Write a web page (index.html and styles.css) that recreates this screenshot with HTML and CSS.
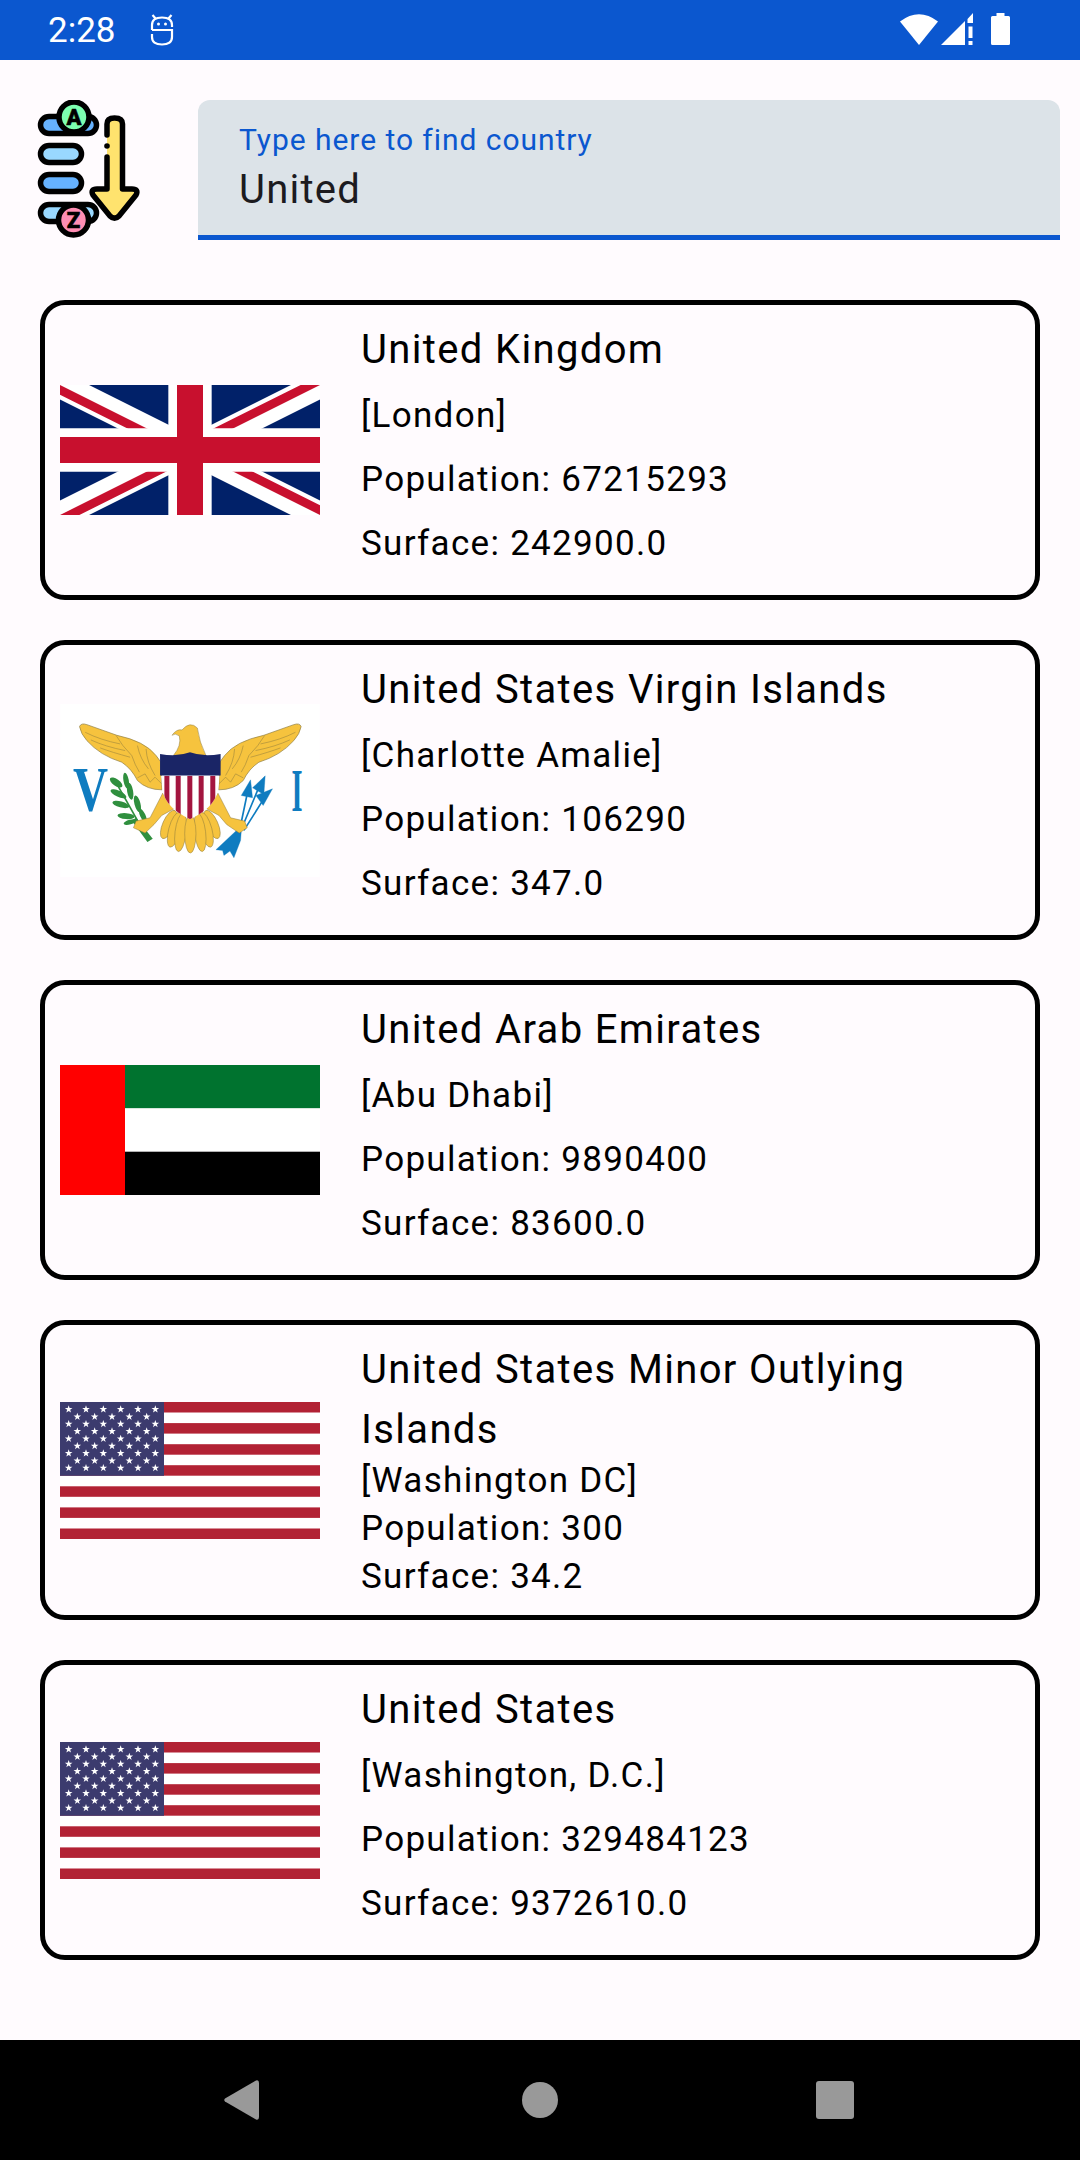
FILE: index.html
```html
<!DOCTYPE html>
<html lang="en">
<head>
  <meta charset="UTF-8">
  <title>Countries</title>
  <link rel="stylesheet" href="styles.css">
</head>
<body>
  <svg class="defs" width="0" height="0">
    <defs>
      <polygon id="star" points="0,-4 0.95,-1.25 3.8,-1.25 1.5,0.5 2.35,3.25 0,1.55 -2.35,3.25 -1.5,0.5 -3.8,-1.25 -0.95,-1.25"/>
      <g id="row6">
        <use href="#star" x="8.67"/><use href="#star" x="26"/><use href="#star" x="43.33"/>
        <use href="#star" x="60.67"/><use href="#star" x="78"/><use href="#star" x="95.33"/>
      </g>
      <g id="row5">
        <use href="#star" x="17.33"/><use href="#star" x="34.67"/><use href="#star" x="52"/>
        <use href="#star" x="69.33"/><use href="#star" x="86.67"/>
      </g>
      <symbol id="us-flag" viewBox="0 0 260 137">
        <rect width="260" height="137" fill="#fff"/>
        <g fill="#b22234">
          <rect y="0" width="260" height="10.5"/><rect y="21.1" width="260" height="10.5"/>
          <rect y="42.2" width="260" height="10.5"/><rect y="63.2" width="260" height="10.5"/>
          <rect y="84.3" width="260" height="10.5"/><rect y="105.4" width="260" height="10.5"/>
          <rect y="126.5" width="260" height="10.5"/>
        </g>
        <rect width="104" height="73.8" fill="#3c3b6e"/>
        <g fill="#fff">
          <use href="#row6" y="7.33"/><use href="#row5" y="14.67"/><use href="#row6" y="22"/>
          <use href="#row5" y="29.33"/><use href="#row6" y="36.67"/><use href="#row5" y="44"/>
          <use href="#row6" y="51.33"/><use href="#row5" y="58.67"/><use href="#row6" y="66"/>
        </g>
      </symbol>
    </defs>
  </svg>

  <header class="status-bar">
    <span class="clock">2:28</span>
    <svg class="status-robot" width="24" height="32" viewBox="0 0 24 32" fill="none" stroke="#fff" stroke-width="2.200">
      <path d="M2.500 1L6 5M21.500 1L18 5"/>
      <path d="M2 16V11Q2 3.500 12 3.500T22 11V13"/>
      <path d="M2 16H22V23Q22 30.500 12 30.500T2 23V20"/>
      <circle cx="8.500" cy="10" r="1.500" fill="#fff" stroke="none"/>
      <circle cx="15.500" cy="10" r="1.500" fill="#fff" stroke="none"/>
    </svg>
    <div class="status-icons">
      <svg width="38" height="32" viewBox="0 0 38 32"><path d="M0 8.5Q19-6 38 8.5L19 32Z" fill="#fff"/></svg>
      <svg class="signal" width="32" height="32" viewBox="0 0 32 32"><path d="M0 32L24 8V32ZM32 0V10H26.500V6ZM27.500 13.500H31.500V25H27.500ZM27.500 28H31.500V32H27.500Z" fill="#fff"/></svg>
      <svg class="battery" width="19" height="32" viewBox="0 0 19 32"><path d="M5.500 0H13.500V3H17.500Q19 3 19 4.500V30.500Q19 32 17.500 32H1.500Q0 32 0 30.500V4.500Q0 3 1.500 3H5.500Z" fill="#fff"/></svg>
    </div>
  </header>

  <main class="content">
    <div class="search-row">
      <svg class="logo" width="198" height="140" viewBox="0 100 198 140" stroke="#000" stroke-width="5.500">
        <rect x="40.500" y="116.500" width="56" height="17" rx="8.500" fill="#66b2ff"/>
        <rect x="40.500" y="145.500" width="41" height="17" rx="8.500" fill="#99d8ff"/>
        <rect x="40.500" y="174.500" width="41" height="17" rx="8.500" fill="#66b2ff"/>
        <rect x="40.500" y="204.500" width="56" height="17" rx="8.500" fill="#99d8ff"/>
        <circle cx="74" cy="117" r="15" fill="#7dffb0"/>
        <circle cx="73.500" cy="220" r="15" fill="#ff8db3"/>
        <text class="logo-letter" x="74" y="124.500">A</text>
        <text class="logo-letter" x="73.500" y="227.500">Z</text>
        <path d="M107 135V124Q107 118 114.500 118Q122.500 118 122.500 124V189H132Q139 189 136 195L119 216Q114.500 220.500 110 216L93 195Q90 189 97 189H107V157" fill="#ffe36e" stroke-linejoin="round" stroke-linecap="round"/>
        <circle cx="107" cy="146" r="2.800" fill="#000" stroke="none"/>
      </svg>
      <label class="search-field">
        <span class="search-label">Type here to find country</span>
        <span class="search-value">United</span>
      </label>
    </div>

    <section class="country-list">
      <article class="card">
        <svg class="flag" width="260" height="130" viewBox="0 0 60 30">
          <clipPath id="uk-clip"><path d="M30 15h30v15zv15H0zH0V0zV0h30z"/></clipPath>
          <rect width="60" height="30" fill="#012169"/>
          <path d="M0 0L60 30M60 0L0 30" stroke="#fff" stroke-width="6"/>
          <path d="M0 0L60 30M60 0L0 30" stroke="#c8102e" stroke-width="4" clip-path="url(#uk-clip)"/>
          <path d="M30 0V30M0 15H60" stroke="#fff" stroke-width="10"/>
          <path d="M30 0V30M0 15H60" stroke="#c8102e" stroke-width="6"/>
        </svg>
        <div class="card-text">
          <div class="country-name">United Kingdom</div>
          <div class="country-line">[London]</div>
          <div class="country-line">Population: 67215293</div>
          <div class="country-line">Surface: 242900.0</div>
        </div>
      </article>

      <article class="card">
        <svg class="flag" width="260" height="173" viewBox="30 10 780 520">
          <rect x="30" y="10" width="780" height="520" fill="#fff"/>
          <text class="vi-letter" transform="translate(68 332) scale(1 1.300)" font-size="146">V</text>
          <text class="vi-letter" transform="translate(725 332) scale(1 2.200)" font-size="85">I</text>
          <!-- branch -->
          <g fill="#2f8f3e">
            <path d="M308 415L292 425L245 360L258 352Z"/>
            <ellipse cx="198" cy="246" rx="22" ry="10" transform="rotate(35 198 246)"/>
            <ellipse cx="228" cy="240" rx="24" ry="8" transform="rotate(80 228 240)"/>
            <ellipse cx="205" cy="280" rx="26" ry="9" transform="rotate(25 205 280)"/>
            <ellipse cx="240" cy="272" rx="26" ry="9" transform="rotate(80 240 272)"/>
            <ellipse cx="212" cy="312" rx="26" ry="9" transform="rotate(15 212 312)"/>
            <ellipse cx="262" cy="310" rx="26" ry="9" transform="rotate(75 262 310)"/>
            <ellipse cx="228" cy="347" rx="26" ry="9" transform="rotate(5 228 347)"/>
            <ellipse cx="278" cy="345" rx="22" ry="8" transform="rotate(65 278 345)"/>
            <ellipse cx="240" cy="365" rx="20" ry="7" transform="rotate(-15 240 365)"/>
            <path d="M200 250L262 360" stroke="#2f8f3e" stroke-width="5"/>
          </g>
          <!-- arrows -->
          <g fill="#0f7cc0" stroke="#0f7cc0">
            <path d="M570 385L594 270M575 385L625 265M582 390L645 290" stroke-width="5" fill="none"/>
            <path d="M602 238L608 292L574 285Z"/>
            <path d="M646 226L642 282L608 262Z"/>
            <path d="M668 265L640 315L618 285Z"/>
            <path d="M562 388L498 448L518 450L522 465L540 452L552 472L572 420L574 395Z"/>
          </g>
          <!-- wings -->
          <g id="vi-wing" fill="#f6c33e" stroke="#8c7a3c" stroke-width="2">
            <path d="M88 78Q92 66 110 72L200 104Q285 122 318 165L332 184L336 268Q290 268 262 240Q245 205 215 185Q150 165 110 120Q92 100 88 78Z"/>
            <path d="M105 95Q150 118 210 130M122 118Q165 138 225 150M150 142Q185 155 240 170M198 105Q215 135 245 165Q255 195 268 215M262 135Q270 175 295 205M288 145Q290 185 315 225M262 232L285 220L300 245L315 230L335 250" fill="none" stroke-width="1.500"/>
          </g>
          <use href="#vi-wing" transform="translate(842 0) scale(-1 1)"/>
          <!-- tail and feet -->
          <g fill="#f6c33e" stroke="#8c7a3c" stroke-width="1.500">
            <ellipse cx="356" cy="372" rx="18" ry="46" transform="rotate(24 356 372)"/>
            <ellipse cx="486" cy="372" rx="18" ry="46" transform="rotate(-24 486 372)"/>
            <ellipse cx="374" cy="388" rx="18" ry="54" transform="rotate(15 374 388)"/>
            <ellipse cx="468" cy="388" rx="18" ry="54" transform="rotate(-15 468 388)"/>
            <ellipse cx="392" cy="396" rx="17" ry="58" transform="rotate(7 392 396)"/>
            <ellipse cx="450" cy="396" rx="17" ry="58" transform="rotate(-7 450 396)"/>
            <ellipse cx="421" cy="400" rx="17" ry="58"/>
            <path d="M338 278L372 325L335 345L312 372L285 398L250 382L258 362L300 352Z"/>
            <path d="M504 278L470 325L507 345L530 372L568 398L592 382L584 362L542 352Z"/>
          </g>
          <!-- head -->
          <path d="M366 104Q380 84 396 88Q420 60 442 82Q448 125 468 165L370 165Q395 135 388 106Q375 96 366 104Z" fill="#f6c33e" stroke="#8c7a3c" stroke-width="1.500"/>
          <!-- shield -->
          <clipPath id="vi-shield"><path d="M333 225H509L505 270Q490 325 420 356Q350 325 337 270Z"/></clipPath>
          <g clip-path="url(#vi-shield)">
            <rect x="330" y="225" width="182" height="135" fill="#fff"/>
            <g fill="#a3153f">
              <rect x="343" y="225" width="15" height="135"/><rect x="377" y="225" width="15" height="135"/>
              <rect x="412" y="225" width="15" height="135"/><rect x="446" y="225" width="15" height="135"/>
              <rect x="481" y="225" width="15" height="135"/>
            </g>
          </g>
          <path d="M330 160Q380 170 420 155Q460 170 512 160V225H330Z" fill="#1a2566"/>
        </svg>
        <div class="card-text">
          <div class="country-name">United States Virgin Islands</div>
          <div class="country-line">[Charlotte Amalie]</div>
          <div class="country-line">Population: 106290</div>
          <div class="country-line">Surface: 347.0</div>
        </div>
      </article>

      <article class="card">
        <svg class="flag" width="260" height="130" viewBox="0 0 260 130">
          <rect x="65" width="195" height="43.400" fill="#00732f"/>
          <rect x="65" y="43.400" width="195" height="43.300" fill="#fff"/>
          <rect x="65" y="86.700" width="195" height="43.300" fill="#000"/>
          <rect width="65" height="130" fill="#f00"/>
        </svg>
        <div class="card-text">
          <div class="country-name">United Arab Emirates</div>
          <div class="country-line">[Abu Dhabi]</div>
          <div class="country-line">Population: 9890400</div>
          <div class="country-line">Surface: 83600.0</div>
        </div>
      </article>

      <article class="card">
        <svg class="flag" width="260" height="137"><use href="#us-flag" width="260" height="137"/></svg>
        <div class="card-text card-text-long">
          <div class="country-name">United States Minor Outlying Islands</div>
          <div class="country-line">[Washington DC]</div>
          <div class="country-line">Population: 300</div>
          <div class="country-line">Surface: 34.2</div>
        </div>
      </article>

      <article class="card">
        <svg class="flag" width="260" height="137"><use href="#us-flag" width="260" height="137"/></svg>
        <div class="card-text">
          <div class="country-name">United States</div>
          <div class="country-line">[Washington, D.C.]</div>
          <div class="country-line">Population: 329484123</div>
          <div class="country-line">Surface: 9372610.0</div>
        </div>
      </article>
    </section>
  </main>

  <nav class="nav-bar">
    <svg width="40" height="40" viewBox="0 0 40 40"><path d="M1 18.500L32 0.500Q35 -0.500 35 3V37Q35 40.500 32 39.500L1 21.500Q-0.500 20 1 18.500Z" fill="#999"/></svg>
    <span class="nav-home"></span>
    <span class="nav-recent"></span>
  </nav>
</body>
</html>
```

FILE: styles.css
```css
:root {
  --primary-color: #0b57cf;
  --page-color: #fffbfe;
}

body {
  margin: 0;
  width: 1080px;
  height: 2160px;
  display: flex;
  flex-direction: column;
  background: var(--page-color);
  font-family: Roboto, "Liberation Sans", sans-serif;
  color: #000;
  overflow: hidden;
}

.defs {
  position: absolute;
}

/* status bar */
.status-bar {
  height: 60px;
  flex: none;
  display: flex;
  align-items: center;
  padding: 0 70px 0 48px;
  background: var(--primary-color);
  color: #fff;
  box-sizing: border-box;
}

.clock {
  font-size: 35px;
  width: 102px;
}

.status-robot {
  flex: none;
}

.status-icons {
  margin-left: auto;
  display: flex;
  align-items: center;
  gap: 3px;
  margin-top: -3px;
}

.status-icons .battery {
  margin-left: 15px;
}

/* search row */
.content {
  flex: 1;
}

.search-row {
  display: flex;
  padding: 40px 20px 0 0;
}

.logo {
  flex: none;
}

.search-field {
  flex: 1;
  height: 140px;
  box-sizing: border-box;
  display: flex;
  flex-direction: column;
  padding: 20px 41px 0;
  background: #dce3e8;
  border-bottom: 5px solid var(--primary-color);
  border-radius: 12px 12px 0 0;
}

.search-label {
  font-size: 30px;
  line-height: 40px;
  letter-spacing: 0.950px;
  color: var(--primary-color);
}

.search-value {
  font-size: 40px;
  line-height: 60px;
  letter-spacing: 1.250px;
  color: #1c1b1f;
}

.logo-letter {
  font-size: 22px;
  font-weight: 900;
  text-anchor: middle;
  stroke: #000;
  stroke-width: 0.5px;
  fill: #000;
}

.vi-letter {
  font-family: "Liberation Serif", serif;
  font-weight: 700;
  fill: #0f7cc0;
}

/* cards */
.country-list {
  display: flex;
  flex-direction: column;
  gap: 40px;
  margin: 60px 40px 0;
}

.card {
  height: 300px;
  box-sizing: border-box;
  display: flex;
  align-items: center;
  gap: 41px;
  padding: 0 15px;
  border: 5px solid #000;
  border-radius: 25px;
}

.flag {
  flex: none;
}

.card-text {
  align-self: flex-start;
  padding-top: 15px;
}

.country-name {
  font-size: 40px;
  line-height: 60px;
  letter-spacing: 1.350px;
  margin-bottom: 4px;
}

.country-line {
  font-size: 35px;
  line-height: 64px;
  letter-spacing: 1.300px;
}

.card-text-long .country-name {
  margin-bottom: -3px;
}

.card-text-long .country-line {
  line-height: 48px;
}

/* navigation bar */
.nav-bar {
  height: 120px;
  flex: none;
  display: flex;
  align-items: center;
  justify-content: space-between;
  padding: 0 226px 0 224px;
  background: #000;
}

.nav-home {
  width: 36px;
  height: 36px;
  border-radius: 50%;
  background: #999;
}

.nav-recent {
  width: 38px;
  height: 38px;
  border-radius: 3px;
  background: #999;
}
```
